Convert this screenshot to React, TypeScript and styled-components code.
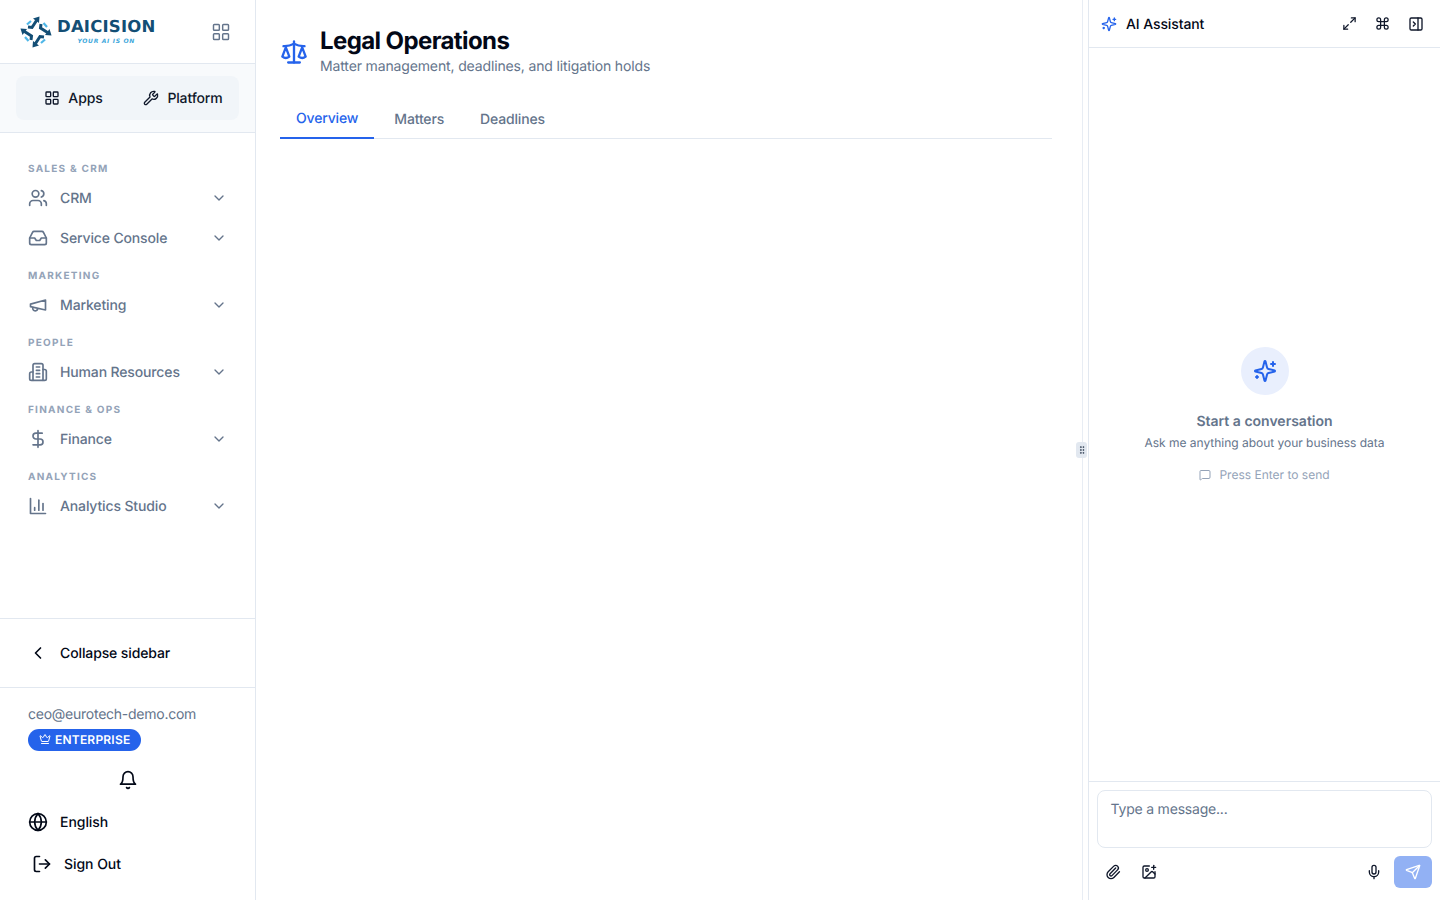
import * as React from "react";
import styled, { createGlobalStyle } from "styled-components";
import {
  ChevronDown,
  ChevronLeft,
  Command,
  Crown,
  DollarSign,
  GripVertical,
  Globe,
  ImagePlus,
  Inbox,
  LayoutGrid,
  LogOut,
  Maximize2,
  MessageSquare,
  Mic,
  PanelRightClose,
  Paperclip,
  Scale,
  Send,
  Users,
  Wrench,
} from "lucide-react";

const GlobalStyle = createGlobalStyle`
  html, body {
    margin: 0;
    height: 100%;
    background: #fff;
    overflow: hidden;
  }
  * { box-sizing: border-box; }
  body {
    font-family: Inter, "Noto Sans", sans-serif;
    color: #020817;
    text-rendering: geometricPrecision;
    -webkit-font-smoothing: antialiased;
  }
`;

const Shell = styled.div`
  display: flex;
  width: 1440px;
  height: 900px;
`;

const Sidebar = styled.aside`
  display: flex;
  flex-direction: column;
  width: 256px;
  flex: none;
  border-right: 1px solid #e2e8f0;
`;

const LogoBar = styled.div`
  display: flex;
  align-items: center;
  justify-content: space-between;
  height: 64px;
  padding: 0 24px 0 16px;
  border-bottom: 1px solid #e2e8f0;
  color: #64748b;
`;

const Logo = styled.div`
  display: flex;
  align-items: center;
  gap: 1px;
`;

const LogoText = styled.div`
  display: flex;
  flex-direction: column;
  align-items: center;
  padding-top: 2px;
`;

const LogoName = styled.span`
  font-family: "DejaVu Sans", sans-serif;
  font-weight: 700;
  font-size: 16.5px;
  line-height: 16px;
  letter-spacing: 0.2px;
  color: #134e75;
`;

const LogoTag = styled.span`
  margin-top: 3px;
  font-family: "DejaVu Sans", sans-serif;
  font-weight: 700;
  font-style: italic;
  font-size: 6px;
  line-height: 8px;
  letter-spacing: 0.7px;
  color: #3fa9dc;
`;

const SwitchBand = styled.div`
  height: 69px;
  padding: 12px 16px;
  background: #f8fafc;
  border-bottom: 1px solid #e2e8f0;
`;

const Switch = styled.div`
  display: grid;
  grid-template-columns: 115px 1fr;
  height: 44px;
  padding-right: 4px;
  background: #f1f5f9;
  border-radius: 8px;
`;

const SwitchItem = styled.div`
  display: flex;
  align-items: center;
  justify-content: center;
  gap: 8px;
  font-size: 14px;
  font-weight: 500;
  letter-spacing: -0.13px;
  color: #0f172a;
`;

const Nav = styled.nav`
  flex: 1;
  padding: 18px 12px 0;
`;

const SectionLabel = styled.div`
  height: 27px;
  padding: 12px 16px 0;
  font-size: 10px;
  line-height: 12px;
  font-weight: 700;
  letter-spacing: 1.25px;
  text-transform: uppercase;
  color: #94a3b8;
`;

const NavItem = styled.div`
  display: flex;
  align-items: center;
  height: 40px;
  padding: 0 16px;
  gap: 12px;
  font-size: 14px;
  font-weight: 500;
  letter-spacing: -0.14px;
  color: #64748b;
`;

const NavLabel = styled.span`
  flex: 1;
`;

const CollapseBar = styled.div`
  display: flex;
  align-items: center;
  gap: 12px;
  height: 70px;
  padding: 0 28px;
  border-top: 1px solid #e2e8f0;
  border-bottom: 1px solid #e2e8f0;
  font-size: 14px;
  font-weight: 500;
  letter-spacing: -0.12px;
`;

const Account = styled.div`
  height: 212px;
  padding: 17px 28px 0;
`;

const Email = styled.div`
  font-size: 14px;
  line-height: 20px;
  letter-spacing: -0.25px;
  color: #64748b;
`;

const PlanBadge = styled.div`
  display: inline-flex;
  align-items: center;
  gap: 4px;
  height: 22px;
  margin-top: 4px;
  padding: 0 11px 2px;
  border-radius: 11px;
  background: #2563eb;
  color: #fff;
  font-size: 12px;
  font-weight: 600;
  letter-spacing: 0.2px;
  vertical-align: top;
`;

const BellRow = styled.div`
  display: flex;
  justify-content: center;
  margin-top: 19px;
`;

const AccountRow = styled.div<{ $gap: number; $top: number; $inset?: number }>`
  display: flex;
  align-items: center;
  gap: ${(p) => p.$gap}px;
  margin-top: ${(p) => p.$top}px;
  padding-left: ${(p) => p.$inset ?? 0}px;
  height: 20px;
  font-size: 14px;
  font-weight: 500;
  letter-spacing: -0.05px;
`;

const Main = styled.main`
  width: 826px;
  flex: none;
  padding: 26px 30px 0 24px;
`;

const PageHeader = styled.header`
  display: flex;
  align-items: center;
  gap: 12px;
  color: #2563eb;
`;

const PageTitle = styled.h1`
  margin: 0;
  font-size: 24px;
  line-height: 30px;
  font-weight: 700;
  letter-spacing: -0.6px;
  color: #020817;
`;

const PageSub = styled.p`
  margin: 1px 0 0;
  font-size: 14px;
  line-height: 20px;
  letter-spacing: -0.14px;
  color: #64748b;
`;

const Tabs = styled.div`
  display: flex;
  gap: 4px;
  height: 40px;
  margin-top: 22px;
  border-bottom: 1px solid #e2e8f0;
`;

const Tab = styled.div<{ $active?: boolean }>`
  height: 40px;
  padding: 0 16px;
  font-size: 14px;
  line-height: ${(p) => (p.$active ? 40 : 42)}px;
  font-weight: 500;
  letter-spacing: -0.16px;
  color: ${(p) => (p.$active ? "#2563eb" : "#64748b")};
  border-bottom: 2px solid ${(p) => (p.$active ? "#2563eb" : "transparent")};
`;

const Divider = styled.div`
  width: 7px;
  flex: none;
  display: flex;
  align-items: center;
  border-left: 1px solid #e8edf4;
  border-right: 1px solid #e2e8f0;
`;

const DragHandle = styled.div`
  display: flex;
  align-items: center;
  justify-content: center;
  width: 11px;
  height: 16px;
  margin-left: -7px;
  border-radius: 3px;
  background: #e2e8f0;
  color: #334155;
`;

const Chat = styled.section`
  flex: 1;
  display: flex;
  flex-direction: column;
`;

const ChatHeader = styled.div`
  display: flex;
  align-items: center;
  height: 48px;
  padding: 0 16px 0 12px;
  border-bottom: 1px solid #e2e8f0;
`;

const ChatMark = styled.span`
  display: flex;
  color: #2563eb;
`;

const ChatTitle = styled.span`
  flex: 1;
  margin: 2px 0 0 9px;
  font-size: 14px;
  font-weight: 500;
  letter-spacing: -0.1px;
`;

const HeaderTools = styled.div`
  display: flex;
  align-items: center;
  gap: 18px;
  color: #0f172a;
`;

const Empty = styled.div`
  flex: 1;
  display: flex;
  flex-direction: column;
  align-items: center;
  padding-top: 299px;
`;

const EmptyIcon = styled.div`
  display: flex;
  align-items: center;
  justify-content: center;
  width: 48px;
  height: 48px;
  border-radius: 50%;
  background: #e9effd;
  color: #2563eb;
`;

const EmptyTitle = styled.div`
  margin-top: 17px;
  font-size: 14px;
  line-height: 20px;
  font-weight: 600;
  color: #64748b;
`;

const EmptySub = styled.div`
  margin-top: 3px;
  font-size: 12px;
  line-height: 16px;
  letter-spacing: -0.02px;
  color: #64748b;
`;

const EmptyHint = styled.div`
  display: flex;
  align-items: center;
  gap: 8px;
  margin-top: 16px;
  font-size: 12px;
  line-height: 16px;
  color: #94a3b8;
`;

const Composer = styled.div`
  height: 119px;
  padding: 8px;
  border-top: 1px solid #e2e8f0;
`;

const MessageBox = styled.div`
  height: 58px;
  padding: 10px 12.5px;
  border: 1px solid #e2e8f0;
  border-radius: 8px;
  font-size: 14px;
  line-height: 18px;
  letter-spacing: -0.2px;
  color: #64748b;
`;

const ComposerTools = styled.div`
  display: flex;
  align-items: center;
  gap: 20px;
  margin-top: 8px;
  padding-left: 8px;
  color: #0f172a;
`;

const Spacer = styled.div`
  flex: 1;
`;

const SendButton = styled.div`
  display: flex;
  align-items: center;
  justify-content: center;
  width: 38px;
  height: 32px;
  margin-left: -8px;
  border-radius: 6px;
  background: #92b1f4;
  color: #fff;
`;

type IconProps = { size?: number; strokeWidth?: number };

// icons that changed shape in newer lucide releases, drawn from their older paths
function Stroked({ size = 24, strokeWidth = 2, children }: IconProps & { children: React.ReactNode }) {
  return (
    <svg
      width={size}
      height={size}
      viewBox="0 0 24 24"
      fill="none"
      stroke="currentColor"
      strokeWidth={strokeWidth}
      strokeLinecap="round"
      strokeLinejoin="round"
    >
      {children}
    </svg>
  );
}

function OldMegaphone(props: IconProps) {
  return (
    <Stroked {...props}>
      <path d="m3 11 18-5v12L3 14v-3z" />
      <path d="M11.6 16.8a3 3 0 1 1-5.8-1.6" />
    </Stroked>
  );
}

function OldBuilding(props: IconProps) {
  return (
    <Stroked {...props}>
      <path d="M6 22V4a2 2 0 0 1 2-2h8a2 2 0 0 1 2 2v18Z" />
      <path d="M6 12H4a2 2 0 0 0-2 2v6a2 2 0 0 0 2 2h2" />
      <path d="M18 9h2a2 2 0 0 1 2 2v9a2 2 0 0 1-2 2h-2" />
      <path d="M10 6h4" />
      <path d="M10 10h4" />
      <path d="M10 14h4" />
      <path d="M10 18h4" />
    </Stroked>
  );
}

function OldChart(props: IconProps) {
  return (
    <Stroked {...props}>
      <path d="M3 3v18h18" />
      <path d="M18 17V9" />
      <path d="M13 17V5" />
      <path d="M8 17v-3" />
    </Stroked>
  );
}

function OldBell(props: IconProps) {
  return (
    <Stroked {...props}>
      <path d="M6 8a6 6 0 0 1 12 0c0 7 3 9 3 9H3s3-2 3-9" />
      <path d="M10.3 21a1.94 1.94 0 0 0 3.4 0" />
    </Stroked>
  );
}

function OldSparkles(props: IconProps) {
  return (
    <Stroked {...props}>
      <path d="M9.937 15.5A2 2 0 0 0 8.5 14.063l-6.135-1.582a.5.5 0 0 1 0-.962L8.5 9.936A2 2 0 0 0 9.937 8.5l1.582-6.135a.5.5 0 0 1 .963 0L14.063 8.5A2 2 0 0 0 15.5 9.937l6.135 1.581a.5.5 0 0 1 0 .964L15.5 14.063a2 2 0 0 0-1.437 1.437l-1.582 6.135a.5.5 0 0 1-.963 0z" />
      <path d="M20 3v4" />
      <path d="M22 5h-4" />
      <path d="M4 17v2" />
      <path d="M5 18H3" />
    </Stroked>
  );
}

function LogoMark() {
  return (
    <svg width="40" height="40" viewBox="16 12 40 40" fill="none">
      {[0, 90, 180, 270].map((r) => (
        <g key={r} transform={`rotate(${r} 36 32)`}>
          <path d="M27 24.5 L31 21" stroke="#4fb7e8" strokeWidth="2.2" />
          <path d="M28 27 L32 27.5 L36.5 20.5" stroke="#134e75" strokeWidth="3" />
          <path d="M39.5 16.5 L33 18.5 L39 23 Z" fill="#134e75" />
        </g>
      ))}
    </svg>
  );
}

const groups = [
  { label: "Sales & CRM", items: [{ name: "CRM", icon: Users }, { name: "Service Console", icon: Inbox }] },
  { label: "Marketing", items: [{ name: "Marketing", icon: OldMegaphone }] },
  { label: "People", items: [{ name: "Human Resources", icon: OldBuilding }] },
  { label: "Finance & Ops", items: [{ name: "Finance", icon: DollarSign }] },
  { label: "Analytics", items: [{ name: "Analytics Studio", icon: OldChart }] },
];

function App() {
  return (
    <>
      <GlobalStyle />
      <Shell>
        <Sidebar>
          <LogoBar>
            <Logo>
              <LogoMark />
              <LogoText>
                <LogoName>DAICISION</LogoName>
                <LogoTag>YOUR AI IS ON</LogoTag>
              </LogoText>
            </Logo>
            <LayoutGrid size={20} strokeWidth={1.75} />
          </LogoBar>
          <SwitchBand>
            <Switch>
              <SwitchItem>
                <LayoutGrid size={16} />
                Apps
              </SwitchItem>
              <SwitchItem>
                <Wrench size={16} />
                Platform
              </SwitchItem>
            </Switch>
          </SwitchBand>
          <Nav>
            {groups.map((g) => (
              <div key={g.label}>
                <SectionLabel>{g.label}</SectionLabel>
                {g.items.map((item) => (
                  <NavItem key={item.name}>
                    <item.icon size={20} strokeWidth={2} />
                    <NavLabel>{item.name}</NavLabel>
                    <ChevronDown size={16} />
                  </NavItem>
                ))}
              </div>
            ))}
          </Nav>
          <CollapseBar>
            <ChevronLeft size={20} strokeWidth={2} />
            Collapse sidebar
          </CollapseBar>
          <Account>
            <Email>ceo@eurotech-demo.com</Email>
            <PlanBadge>
              <Crown size={12} />
              ENTERPRISE
            </PlanBadge>
            <BellRow>
              <OldBell size={20} strokeWidth={2} />
            </BellRow>
            <AccountRow $gap={12} $top={22}>
              <Globe size={20} strokeWidth={2} />
              English
            </AccountRow>
            <AccountRow $gap={12} $top={22} $inset={4}>
              <LogOut size={20} strokeWidth={2} />
              Sign Out
            </AccountRow>
          </Account>
        </Sidebar>
        <Main>
          <PageHeader>
            <Scale size={28} strokeWidth={2} />
            <div>
              <PageTitle>Legal Operations</PageTitle>
              <PageSub>Matter management, deadlines, and litigation holds</PageSub>
            </div>
          </PageHeader>
          <Tabs>
            <Tab $active>Overview</Tab>
            <Tab>Matters</Tab>
            <Tab>Deadlines</Tab>
          </Tabs>
        </Main>
        <Divider>
          <DragHandle>
            <GripVertical size={10} />
          </DragHandle>
        </Divider>
        <Chat>
          <ChatHeader>
            <ChatMark>
              <OldSparkles size={16} />
            </ChatMark>
            <ChatTitle>AI Assistant</ChatTitle>
            <HeaderTools>
              <Maximize2 size={15} strokeWidth={2} />
              <Command size={15} strokeWidth={2} />
              <PanelRightClose size={16} strokeWidth={2} />
            </HeaderTools>
          </ChatHeader>
          <Empty>
            <EmptyIcon>
              <OldSparkles size={24} />
            </EmptyIcon>
            <EmptyTitle>Start a conversation</EmptyTitle>
            <EmptySub>Ask me anything about your business data</EmptySub>
            <EmptyHint>
              <MessageSquare size={12} />
              Press Enter to send
            </EmptyHint>
          </Empty>
          <Composer>
            <MessageBox>Type a message...</MessageBox>
            <ComposerTools>
              <Paperclip size={16} />
              <ImagePlus size={16} />
              <Spacer />
              <Mic size={16} />
              <SendButton>
                <Send size={16} />
              </SendButton>
            </ComposerTools>
          </Composer>
        </Chat>
      </Shell>
    </>
  );
}

export default App;
